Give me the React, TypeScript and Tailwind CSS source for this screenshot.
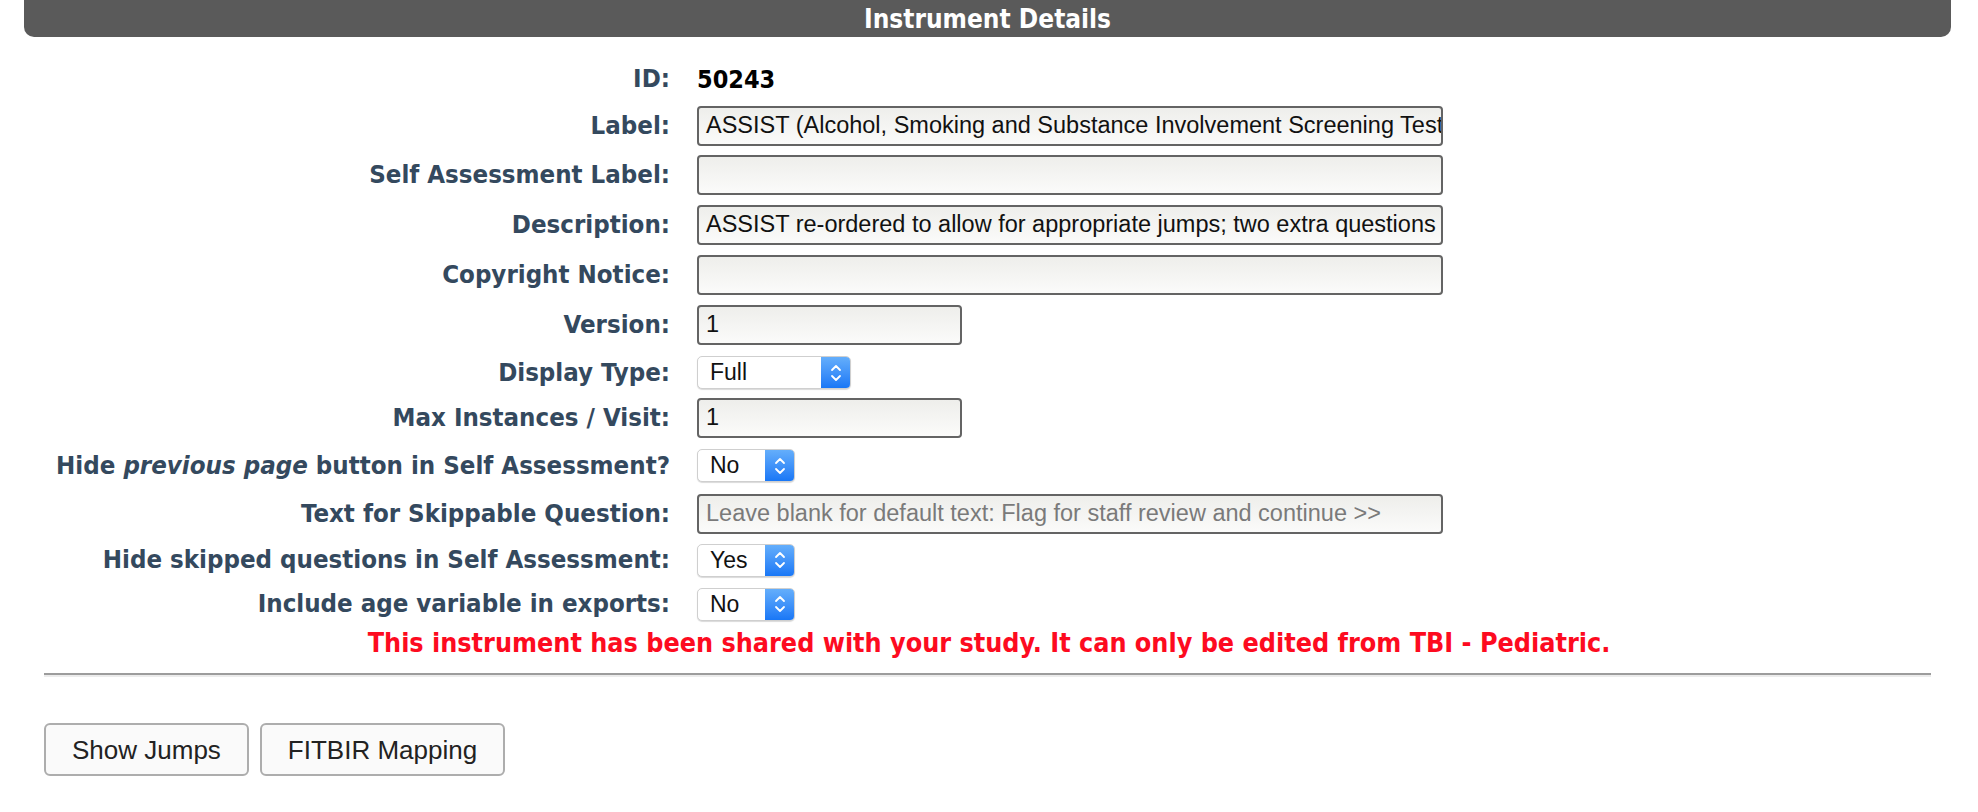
import React from "react";

const labelFont = { fontFamily: '"DejaVu Sans Condensed", "DejaVu Sans", Verdana, sans-serif' };
const inputFont = { fontFamily: '"Liberation Sans", Arial, Helvetica, sans-serif' };

function Row({ h, label, children }: { h: string; label: React.ReactNode; children?: React.ReactNode }) {
  return (
    <div className={`flex items-center ${h}`}>
      <div
        className="w-[670px] shrink-0 text-right text-[25.6px] font-bold text-[#34495e] leading-none whitespace-nowrap"
        style={labelFont}
      >
        {label}
      </div>
      <div className="ml-[27px] flex items-center">{children}</div>
    </div>
  );
}

function TextInput({ w, value, placeholder }: { w: string; value?: string; placeholder?: string }) {
  return (
    <div
      className={`${w} h-[40px] rounded-[4px] border-2 border-[#646464] bg-gradient-to-b from-[#eeeeeb] to-[#fbfbfa] pl-[7px] pr-[2px] flex items-center overflow-hidden whitespace-nowrap text-[23.5px] leading-none`}
      style={inputFont}
    >
      {value ? (
        <span className="text-[#111]">{value}</span>
      ) : placeholder ? (
        <span className="text-[#7a7a7a]">{placeholder}</span>
      ) : null}
    </div>
  );
}

function Select({ w, value }: { w: string; value: string }) {
  return (
    <div
      className={`${w} h-[33px] flex rounded-[5px] border border-[#cfcfcf] bg-white shadow-[0_1px_1px_rgba(0,0,0,0.15)] overflow-hidden`}
      style={inputFont}
    >
      <div className="flex-1 flex items-center pl-[12px] text-[23px] leading-none text-[#111]">{value}</div>
      <div className="w-[29px] bg-gradient-to-b from-[#64aefb] to-[#1877f6] flex items-center justify-center">
        <svg width="14" height="22" viewBox="0 0 14 22" fill="none" stroke="white" strokeWidth="1.8" strokeLinecap="round" strokeLinejoin="round">
          <path d="M3 8 L7 4 L11 8" />
          <path d="M3 14 L7 18 L11 14" />
        </svg>
      </div>
    </div>
  );
}

export default function App() {
  return (
    <div className="w-[1978px] h-[812px] bg-white overflow-hidden">
      <div className="ml-[24px] mr-[27px] h-[37px] bg-[#5a5a5a] rounded-b-[10px] flex items-center justify-center">
        <span className="text-white text-[26px] font-bold leading-none" style={labelFont}>
          Instrument Details
        </span>
      </div>

      <div className="mt-[19px] flex flex-col">
        <Row h="h-[46px]" label="ID:">
          <span className="text-[25px] font-bold text-black leading-none" style={labelFont}>
            50243
          </span>
        </Row>
        <Row h="h-[48px]" label="Label:">
          <TextInput w="w-[746px]" value="ASSIST (Alcohol, Smoking and Substance Involvement Screening Test)" />
        </Row>
        <Row h="h-[50px]" label="Self Assessment Label:">
          <TextInput w="w-[746px]" />
        </Row>
        <Row h="h-[50px]" label="Description:">
          <TextInput w="w-[746px]" value="ASSIST re-ordered to allow for appropriate jumps; two extra questions" />
        </Row>
        <Row h="h-[50px]" label="Copyright Notice:">
          <TextInput w="w-[746px]" />
        </Row>
        <Row h="h-[50px]" label="Version:">
          <TextInput w="w-[265px]" value="1" />
        </Row>
        <Row h="h-[45px]" label="Display Type:">
          <Select w="w-[154px]" value="Full" />
        </Row>
        <Row h="h-[46px]" label="Max Instances / Visit:">
          <TextInput w="w-[265px]" value="1" />
        </Row>
        <Row
          h="h-[49px]"
          label={
            <>
              Hide <i>previous page</i> button in Self Assessment?
            </>
          }
        >
          <Select w="w-[98px]" value="No" />
        </Row>
        <Row h="h-[47px]" label="Text for Skippable Question:">
          <TextInput w="w-[746px]" placeholder="Leave blank for default text: Flag for staff review and continue >>" />
        </Row>
        <Row h="h-[46px]" label="Hide skipped questions in Self Assessment:">
          <Select w="w-[98px]" value="Yes" />
        </Row>
        <Row h="h-[42px]" label="Include age variable in exports:">
          <Select w="w-[98px]" value="No" />
        </Row>
        <div
          className="h-[36px] flex items-center justify-center text-[26.7px] font-bold text-[#fd0b1f] leading-none"
          style={labelFont}
        >
          This instrument has been shared with your study. It can only be edited from TBI - Pediatric.
        </div>
      </div>

      <div className="ml-[44px] mr-[47px] mt-[12px] border-t-2 border-b-2 border-t-[#9c9c9c] border-b-[#ececec]" />

      <div className="ml-[44px] mt-[46px] flex gap-[11px]" style={inputFont}>
        <button className="h-[53px] px-[26px] rounded-[6px] border-2 border-[#adadad] bg-[#fafafa] text-[26px] text-[#222] leading-none">
          Show Jumps
        </button>
        <button className="h-[53px] px-[26px] rounded-[6px] border-2 border-[#adadad] bg-[#fafafa] text-[26px] text-[#222] leading-none">
          FITBIR Mapping
        </button>
      </div>
    </div>
  );
}
